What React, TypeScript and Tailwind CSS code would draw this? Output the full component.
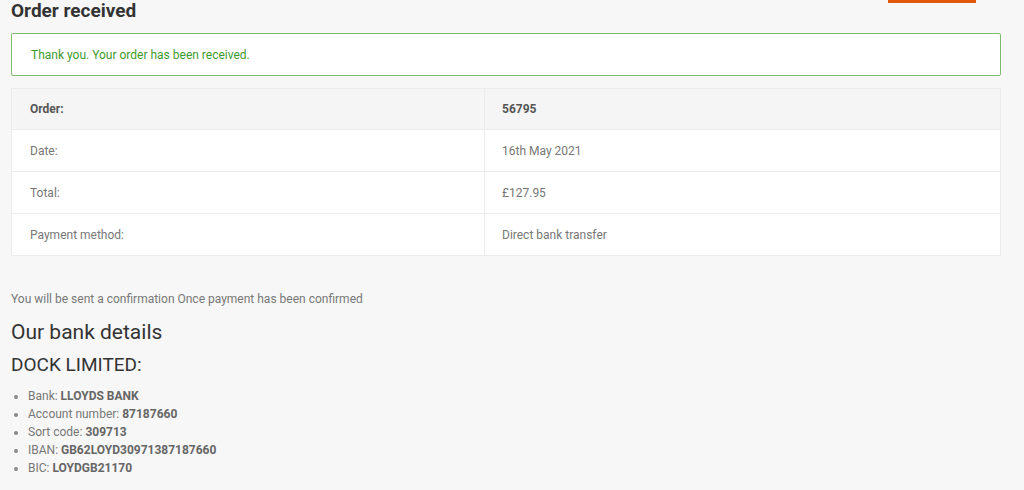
export default function App() {
  const rows = [
    { label: 'Order:', value: '56795', head: true },
    { label: 'Date:', value: '16th May 2021' },
    { label: 'Total:', value: '£127.95' },
    { label: 'Payment method:', value: 'Direct bank transfer' },
  ];

  const bank = [
    { label: 'Bank:', value: 'LLOYDS BANK' },
    { label: 'Account number:', value: '87187660' },
    { label: 'Sort code:', value: '309713' },
    { label: 'IBAN:', value: 'GB62LOYD30971387187660' },
    { label: 'BIC:', value: 'LOYDGB21170' },
  ];

  return (
    <div className="relative min-h-[490px] w-[1024px] bg-[#f7f7f7] font-['Roboto',sans-serif] text-[#333]">
      <div className="absolute left-[888px] top-0 h-[3px] w-[88px] bg-[#e2580d]" />
      <div className="w-[990px] pl-[11px] box-content">
        <h1 className="text-[19px] font-bold leading-[21px] text-[#333]">Order received</h1>

        <div className="mt-[12px] flex h-[43px] items-center rounded-[2px] border border-[#7dbd6d] bg-white pl-[19px] text-[12px] text-[#3f9a2e]">
          Thank you. Your order has been received.
        </div>

        <div className="mt-[12px] border border-[#ececec] bg-white text-[12px]">
          {rows.map((r, i) => (
            <div
              key={r.label}
              className={`grid grid-cols-[473px_1fr] ${i > 0 ? 'h-[42px] border-t border-[#ececec]' : 'h-[40px]'} ${r.head ? 'bg-[#f5f5f5] font-bold text-[#555]' : 'text-[#777]'}`}
            >
              <div className="flex items-center border-r border-[#ececec] pl-[18px]">{r.label}</div>
              <div className="flex items-center pl-[17px]">{r.value}</div>
            </div>
          ))}
        </div>

        <p className="mt-[36px] text-[12px] leading-[14px] text-[#777]">
          You will be sent a confirmation Once payment has been confirmed
        </p>
        <h2 className="mt-[14px] text-[21px] leading-[24px] text-[#333]">Our bank details</h2>
        <h3 className="mt-[10px] text-[19px] leading-[22px] text-[#333]">DOCK LIMITED:</h3>

        <ul className="mt-[11px] list-disc pl-[17px] text-[12px] leading-[18px] text-[#777] marker:text-[#888]">
          {bank.map((b) => (
            <li key={b.label}>
              {b.label} <strong className="font-bold text-[#666]">{b.value}</strong>
            </li>
          ))}
        </ul>
      </div>
    </div>
  );
}
